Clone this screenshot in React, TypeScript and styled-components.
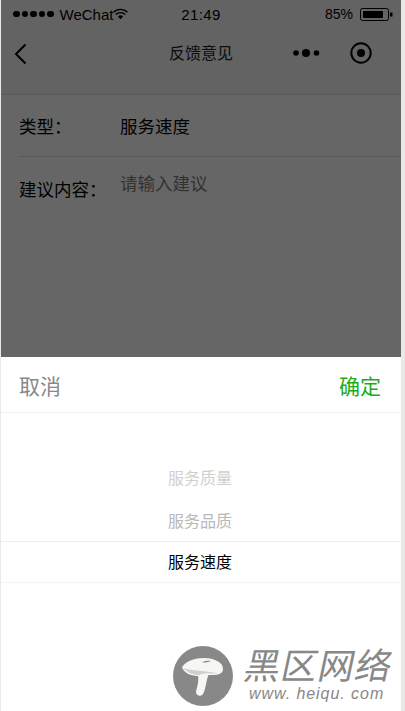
import * as React from "react";
import styled, { createGlobalStyle } from "styled-components";

const GlobalStyle = createGlobalStyle`
  html, body {
    margin: 0;
    padding: 0;
    background: #e9e9e7;
  }
  body {
    font-family: "Liberation Sans", "Noto Sans CJK SC", sans-serif;
  }
`;

const Page = styled.div`
  position: relative;
  width: 405px;
  height: 711px;
  overflow: hidden;
  background: #e9e9e7;
  padding: 0 4px 0 1px;
  box-sizing: border-box;
  display: flex;
  flex-direction: column;
`;

const Backdrop = styled.div`
  position: relative;
  height: 357px;
  flex: none;
  padding-top: 1px;
  box-sizing: border-box;
  background: #f8f8f8;
`;

const Scrim = styled.div`
  position: absolute;
  inset: 0;
  background: rgba(0, 0, 0, 0.6);
`;

const StatusBar = styled.div`
  display: grid;
  grid-template-columns: 1fr 1fr 1fr;
  align-items: center;
  height: 26px;
  padding: 0 8px 0 12px;
  font-size: 15px;
  color: #000;
`;

const StatusLeft = styled.div`
  display: flex;
  align-items: center;
  white-space: nowrap;
`;

const Signal = styled.div`
  display: flex;
  gap: 2px;
  margin-right: 6px;
`;

const SignalDot = styled.span`
  width: 6.5px;
  height: 6.5px;
  border-radius: 50%;
  background: #000;
`;

const StatusTime = styled.div`
  text-align: center;
  font-size: 15px;
  letter-spacing: 0.4px;
  margin-right: 4px;
`;

const StatusRight = styled.div`
  display: flex;
  align-items: center;
  justify-content: flex-end;
  gap: 7px;
  font-size: 14px;
`;

const NavBar = styled.div`
  position: relative;
  display: flex;
  align-items: center;
  justify-content: space-between;
  height: 68px;
  padding: 0 29px 13px 13px;
  box-sizing: border-box;
  background: #f8f8f8;
  border-bottom: 1px solid #e0e0e0;
`;

const NavTitle = styled.div`
  position: absolute;
  left: 0;
  right: 0;
  top: 17px;
  text-align: center;
  font-size: 16px;
  line-height: 20px;
  color: #222;
`;

const NavActions = styled.div`
  display: flex;
  align-items: center;
  gap: 30px;
  margin-top: -3px;
`;

const Form = styled.div`
  background: #fff;
  height: 262px;
  padding-left: 19px;
`;

const FormRow = styled.div<{ $tall?: boolean }>`
  display: flex;
  height: ${p => (p.$tall ? "auto" : "61px")};
  align-items: ${p => (p.$tall ? "flex-start" : "center")};
  border-bottom: ${p => (p.$tall ? "none" : "1px solid #ddd")};
  font-size: 17.5px;
  color: #000;
`;

const FormLabel = styled.div<{ $offset?: number }>`
  width: 100px;
  flex: none;
  margin-top: ${p => p.$offset ?? 0}px;
  margin-left: -1px;
  margin-right: 1px;
`;

const FormValue = styled.div<{ $muted?: boolean; $offset?: number }>`
  color: ${p => (p.$muted ? "#808080" : "#000")};
  margin-top: ${p => p.$offset ?? 0}px;
`;

const Sheet = styled.div`
  flex: 1;
  background: #fff;
`;

const SheetHeader = styled.div`
  display: flex;
  justify-content: space-between;
  align-items: center;
  height: 56px;
  padding: 0 20px 0 18px;
  box-sizing: border-box;
  border-bottom: 1px solid #f2f2f2;
  font-size: 21px;
`;

const SheetButton = styled.div<{ $primary?: boolean }>`
  color: ${p => (p.$primary ? "#1aad19" : "#888")};
`;

const Picker = styled.div`
  padding-top: 42px;
`;

const PickerRow = styled.div<{ $tone: string; $selected?: boolean }>`
  height: ${p => (p.$selected ? "40px" : "43px")};
  line-height: ${p => (p.$selected ? "42px" : "47px")};
  text-align: center;
  font-size: 16px;
  padding-right: 2px;
  color: ${p => p.$tone};
  border-top: ${p => (p.$selected ? "1px solid #ededed" : "none")};
  border-bottom: ${p => (p.$selected ? "1px solid #f4f4f4" : "none")};
`;

const Watermark = styled.div`
  position: absolute;
  left: 173px;
  top: 646px;
  display: flex;
  align-items: flex-start;
  gap: 12px;
  color: #888;
`;

const WatermarkText = styled.div`
  display: flex;
  flex-direction: column;
  align-items: flex-start;
  padding-top: 1px;
`;

const WatermarkName = styled.div`
  font-size: 36px;
  line-height: 39px;
  font-weight: 400;
  letter-spacing: 1px;
  transform: skewX(-12deg);
  white-space: nowrap;
`;

const WatermarkUrl = styled.div`
  font-size: 16px;
  line-height: 16px;
  font-style: italic;
  letter-spacing: 0.95px;
  margin-left: 4px;
  white-space: nowrap;
`;

const Wifi = () => (
  <svg width="15" height="12" viewBox="0 0 16 12">
    <path d="M0.5 4.2 A10.5 10.5 0 0 1 15.5 4.2" fill="none" stroke="#000" strokeWidth="1.5" />
    <path d="M3 6.6 A7 7 0 0 1 13 6.6" fill="none" stroke="#000" strokeWidth="1.5" />
    <path d="M5.3 8.8 A3.8 3.8 0 0 1 10.7 8.8 L8 11.6 Z" fill="#000" />
  </svg>
);

const Battery = () => (
  <svg width="33" height="13" viewBox="0 0 33 13">
    <rect x="0.5" y="0.5" width="28" height="12" rx="2" fill="none" stroke="#000" />
    <rect x="3" y="3" width="20" height="7" rx="1" fill="#000" />
    <rect x="30" y="4.5" width="2.5" height="4" fill="#000" />
  </svg>
);

const BackIcon = () => (
  <svg width="13" height="22" viewBox="0 0 13 22">
    <path d="M11.5 1.5 L2 11 L11.5 20.5" fill="none" stroke="#000" strokeWidth="2" />
  </svg>
);

const MoreIcon = () => (
  <svg width="27" height="10" viewBox="0 0 27 10">
    <circle cx="3" cy="5" r="2.8" fill="#000" />
    <circle cx="13" cy="5" r="4" fill="#000" />
    <circle cx="23.5" cy="5" r="2.8" fill="#000" />
  </svg>
);

const TargetIcon = () => (
  <svg width="22" height="22" viewBox="0 0 22 22">
    <circle cx="11" cy="11" r="9.7" fill="none" stroke="#000" strokeWidth="2" />
    <circle cx="11" cy="11" r="4" fill="#000" />
  </svg>
);

const Mushroom = () => (
  <svg width="60" height="60" viewBox="0 0 60 60">
    <circle cx="30" cy="30" r="30" fill="#888" />
    <path
      d="M9 21 C13 15 22 12 31 12 C41 12 50 16 50 23 C50 27 46 29 40 29 L35.5 29 C33 35 33 43 30 48 C28 51 23 50 23 46 C24 41 26 36 25 30 C17 30 10 26 9 21 Z"
      fill="#f6f6f4"
    />
    <path d="M10 22 C15 27 21 29 26 29 C30 27 38 27 45 28 C36 24 22 26 10 22 Z" fill="#cfcfcd" />
    <path d="M29 16 C32 15 35 14.5 38 15 C35 16.5 32 17 29 16 Z" fill="#888" />
  </svg>
);

const App: React.FC = () => (
  <Page>
    <GlobalStyle />
    <Backdrop>
      <StatusBar>
        <StatusLeft>
          <Signal>
            {[0, 1, 2, 3, 4].map(i => (
              <SignalDot key={i} />
            ))}
          </Signal>
          WeChat
          <Wifi />
        </StatusLeft>
        <StatusTime>21:49</StatusTime>
        <StatusRight>
          85%
          <Battery />
        </StatusRight>
      </StatusBar>
      <NavBar>
        <BackIcon />
        <NavTitle>反馈意见</NavTitle>
        <NavActions>
          <MoreIcon />
          <TargetIcon />
        </NavActions>
      </NavBar>
      <Form>
        <FormRow>
          <FormLabel>类型：</FormLabel>
          <FormValue>服务速度</FormValue>
        </FormRow>
        <FormRow $tall>
          <FormLabel $offset={19}>建议内容：</FormLabel>
          <FormValue $muted $offset={13}>
            请输入建议
          </FormValue>
        </FormRow>
      </Form>
      <Scrim />
    </Backdrop>
    <Sheet>
      <SheetHeader>
        <SheetButton>取消</SheetButton>
        <SheetButton $primary>确定</SheetButton>
      </SheetHeader>
      <Picker>
        <PickerRow $tone="#cfcfcf">服务质量</PickerRow>
        <PickerRow $tone="#b8b8b8">服务品质</PickerRow>
        <PickerRow $tone="#000" $selected>
          服务速度
        </PickerRow>
      </Picker>
    </Sheet>
    <Watermark>
      <Mushroom />
      <WatermarkText>
        <WatermarkName>黑区网络</WatermarkName>
        <WatermarkUrl>www. heiqu. com</WatermarkUrl>
      </WatermarkText>
    </Watermark>
  </Page>
);

export default App;
